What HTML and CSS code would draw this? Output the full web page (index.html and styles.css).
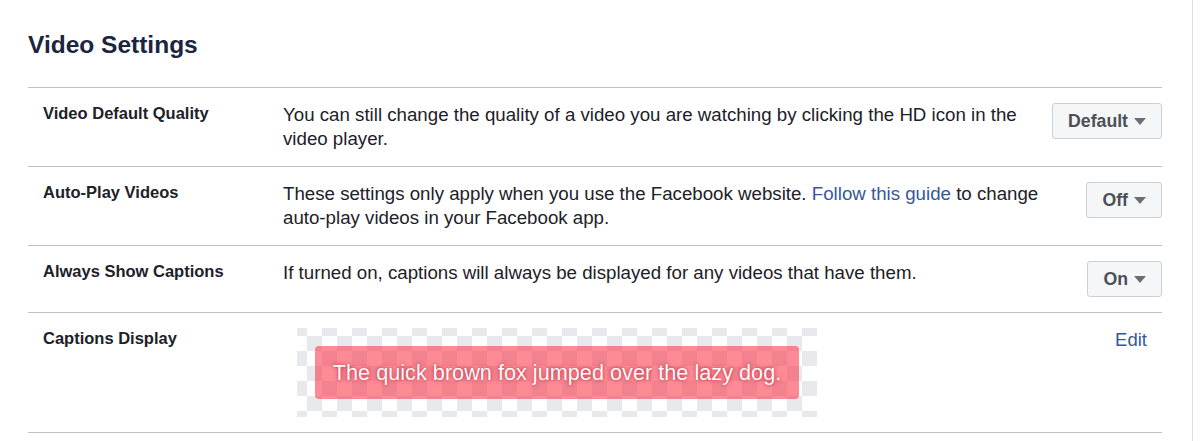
FILE: index.html
```html
<!DOCTYPE html>
<html lang="en">
<head>
<meta charset="utf-8">
<title>Video Settings</title>
<link rel="stylesheet" href="styles.css">
</head>
<body>
<div class="page">
  <h2 class="title">Video Settings</h2>
  <div class="list">
    <div class="row">
      <div class="label">Video Default Quality</div>
      <div class="desc">You can still change the quality of a video you are watching by clicking the HD icon in the video player.</div>
      <div class="action"><button class="select" type="button">Default<span class="caret"></span></button></div>
    </div>
    <div class="row">
      <div class="label">Auto-Play Videos</div>
      <div class="desc">These settings only apply when you use the Facebook website. <a class="link" href="#">Follow this guide</a> to change auto-play videos in your Facebook app.</div>
      <div class="action"><button class="select" type="button">Off<span class="caret"></span></button></div>
    </div>
    <div class="row">
      <div class="label">Always Show Captions</div>
      <div class="desc">If turned on, captions will always be displayed for any videos that have them.</div>
      <div class="action"><button class="select" type="button">On<span class="caret"></span></button></div>
    </div>
    <div class="row row-last">
      <div class="label">Captions Display</div>
      <div class="desc">
        <div class="preview">
          <span class="caption">The quick brown fox jumped over the lazy dog.</span>
        </div>
      </div>
      <div class="action action-edit"><a class="link edit" href="#">Edit</a></div>
    </div>
  </div>
</div>
</body>
</html>
```
FILE: styles.css
```css
html, body {
  margin: 0;
  padding: 0;
  background: #ffffff;
}

body {
  font-family: "Liberation Sans", Arial, Helvetica, sans-serif;
  color: #1d2129;
}

.page {
  box-sizing: border-box;
  width: 1193px;
  min-height: 441px;
  padding: 30px 30px 0 28px;
  border-right: 1px solid #dddfe2;
}

.title {
  margin: 0 0 27px 0;
  font-size: 24.5px;
  line-height: 30px;
  font-weight: bold;
  color: #1a2540;
}

.row {
  display: flex;
  align-items: flex-start;
  padding: 15px 0 15px 15px;
  border-top: 1px solid #bfc2c7;
}

.row-last {
  border-bottom: 1px solid #bfc2c7;
}

.label {
  flex: none;
  width: 240px;
  font-size: 16.5px;
  line-height: 20px;
  font-weight: bold;
  color: #1d2129;
}

.desc {
  flex: 1;
  margin-right: 20px;
  font-size: 18.7px;
  line-height: 24px;
  color: #1d2129;
}

.link {
  color: #365899;
  text-decoration: none;
}

.action {
  flex: none;
}

.action-edit {
  padding-right: 15px;
  font-size: 18.5px;
  line-height: 24px;
}

.select {
  box-sizing: border-box;
  display: inline-flex;
  align-items: center;
  height: 36px;
  padding: 0 15px;
  margin: 0;
  border: 1px solid #ccd0d5;
  border-radius: 3px;
  background: #f5f6f7;
  font-family: "Liberation Sans", Arial, Helvetica, sans-serif;
  font-size: 17.7px;
  font-weight: bold;
  color: #4b4f56;
}

.caret {
  display: inline-block;
  width: 0;
  height: 0;
  margin-left: 6px;
  border-left: 6px solid transparent;
  border-right: 6px solid transparent;
  border-top: 7px solid #6a6f77;
}

.preview {
  box-sizing: border-box;
  display: flex;
  align-items: center;
  justify-content: center;
  width: 520px;
  height: 89px;
  margin-left: 14px;
  background-color: #ffffff;
  background-image: repeating-conic-gradient(#ffffff 0 25%, #e7e9ec 0 50%);
  background-size: 30px 30px;
  background-position: -5px -7px;
}

.caption {
  display: inline-block;
  height: 53px;
  padding: 0 18px;
  border-radius: 4px;
  background: rgba(250, 62, 80, 0.6);
  color: #ffffff;
  font-size: 21.7px;
  line-height: 53px;
  white-space: nowrap;
  text-shadow: 0 0 4px rgba(190, 10, 30, 0.7), 0 0 1px rgba(190, 10, 30, 0.6);
}
```
